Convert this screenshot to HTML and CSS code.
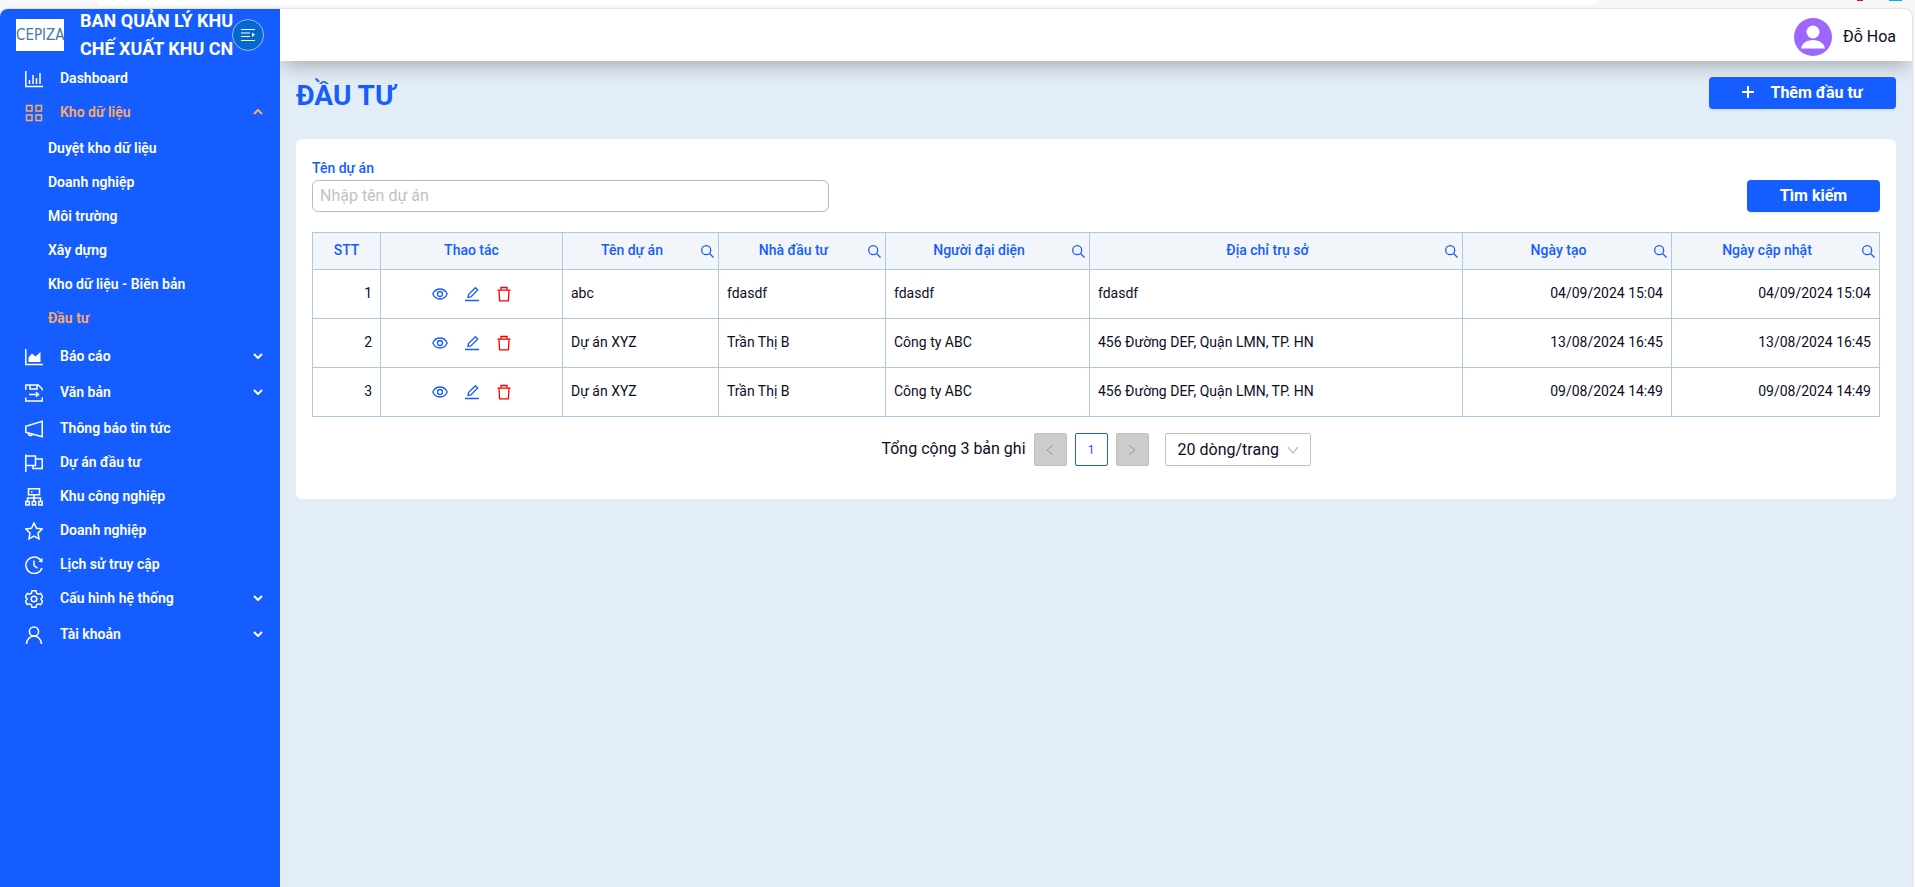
FILE: index.html
```html
<!DOCTYPE html>
<html lang="vi">
<head>
  <meta charset="UTF-8">
  <meta name="viewport" content="width=device-width, initial-scale=1">
  <title>Đầu tư</title>
  <link rel="stylesheet" href="styles.css">
</head>
<body>
  <svg class="sprite" aria-hidden="true">
    <symbol id="i-bar" viewBox="0 0 18 18"><path d="M.8 1v15.5H18M4.5 14v-4M8 14V5M11.5 14V8M15 14V3"/></symbol>
    <symbol id="i-grid" viewBox="0 0 18 18"><path d="M1.500 1.500h5.500v5.500h-5.500zM11 1.500h5.500v5.500H11zM1.500 11h5.500v5.500h-5.500zM11 11h5.500v5.500H11z"/></symbol>
    <symbol id="i-area" viewBox="0 0 18 18"><path d="M.8 1v15.500H18"/><path class="solid" d="M3.500 14V9.500L7 5.500l3.500 3L15.500 4v10z"/></symbol>
    <symbol id="i-save" viewBox="0 0 18 18"><path d="M.8 6V1h12.500l4 4v1.500M5 1v4h7V1M.8 13.500V17h16.500v-3.500M4 10.500h9.500M11 8.300l2.500 2.200-2.500 2.200"/></symbol>
    <symbol id="i-horn" viewBox="0 0 18 18"><path d="M.8 6.300v6l16.400 4.500V1.200L.8 6.300zM3.500 13a2 2 0 1 0 4 1"/></symbol>
    <symbol id="i-flag" viewBox="0 0 18 18"><path d="M.8.500V18M.8 2h9.700v9.500H.8M10.500 5h6.700v9.500H8v-3"/></symbol>
    <symbol id="i-cluster" viewBox="0 0 18 18"><path d="M3.500.800h11v6h-11zM9 7v6M2.500 13v-3h13v3M.800 13.500h3.500V17H.800zM7.200 13.500h3.500V17H7.200zM13.700 13.500h3.500V17h-3.500zM6 4h1.500"/></symbol>
    <symbol id="i-star" viewBox="0 0 18 18"><path d="M9 1l2.500 5.200 5.700.8-4.200 4 1 5.800L9 14l-5 2.800L5 11 .8 7l5.700-.8z"/></symbol>
    <symbol id="i-history" viewBox="0 0 18 18"><path d="M15.800 4.200A8.300 8.300 0 1 0 17 12M9 4.500v5l3.500 2.600"/><path class="solid" d="M17.500 1.800v4.700l-4-.8z"/></symbol>
    <symbol id="i-gear" viewBox="0 0 18 18"><path d="M7 .8h4l.6 2.400 1.700 1 2.400-.7 2 3.500L16 8.800v.7l1.700 1.700-2 3.400-2.400-.7-1.700 1-.6 2.400H7l-.6-2.400-1.700-1-2.400.7-2-3.400L2 9.500v-.8L.3 7l2-3.500 2.400.7 1.700-1z"/><circle cx="9" cy="9" r="2.800"/></symbol>
    <symbol id="i-user" viewBox="0 0 18 18"><circle cx="9" cy="5.500" r="4.600"/><path d="M1.500 18a7.500 7.900 0 0 1 15 0"/></symbol>
    <symbol id="i-chevron" viewBox="0 0 10 6"><path d="M1 1l4 4 4-4"/></symbol>
    <symbol id="i-search" viewBox="0 0 13 13"><circle cx="5.200" cy="5.200" r="4.500"/><path d="M8.500 8.500l4 4"/></symbol>
    <symbol id="i-eye" viewBox="0 0 16 16"><path d="M.8 8C2.300 4.700 4.800 3 8 3s5.700 1.700 7.200 5c-1.500 3.300-4 5-7.200 5S2.300 11.300.8 8z"/><circle cx="8" cy="8" r="2.500"/></symbol>
    <symbol id="i-edit" viewBox="0 0 16 16"><path d="M1 14.500h14M4 11.500l.5-2.900L11.400 1.700l2.300 2.300-6.900 6.900z"/></symbol>
    <symbol id="i-trash" viewBox="0 0 16 16"><path d="M1.500 4.200h13M5 4V1.500h6V4M3 4.500l.6 10.300h8.800L13 4.500"/></symbol>
  </svg>

  <div class="browser-edge"><i class="address"></i><i class="ext red"></i><i class="ext blue"></i></div>
  <div class="app">
    <aside class="sidebar">
      <div class="brand">
        <div class="logo">CEPIZA</div>
        <div class="brand-name">BAN QUẢN LÝ KHU CHẾ XUẤT KHU CN</div>
        <button class="collapse" type="button" aria-label="Thu gọn menu">
          <svg viewBox="0 0 14 14"><path d="M0 1.500h14M0 5h9M0 8.500h9M0 12.500h14"/><path class="solid" d="M11 4.500l3 2.300-3 2.300z"/></svg>
        </button>
      </div>
      <nav>
        <ul class="menu">
          <li><a href="#"><svg class="icon"><use href="#i-bar"/></svg>Dashboard</a></li>
          <li class="parent">
            <a href="#" class="active"><svg class="icon"><use href="#i-grid"/></svg>Kho dữ liệu<svg class="arrow up"><use href="#i-chevron"/></svg></a>
            <ul class="submenu">
              <li><a href="#">Duyệt kho dữ liệu</a></li>
              <li><a href="#">Doanh nghiệp</a></li>
              <li><a href="#">Môi trường</a></li>
              <li><a href="#">Xây dựng</a></li>
              <li><a href="#">Kho dữ liệu - Biên bản</a></li>
              <li><a href="#" class="active">Đầu tư</a></li>
            </ul>
          </li>
          <li class="parent"><a href="#"><svg class="icon"><use href="#i-area"/></svg>Báo cáo<svg class="arrow"><use href="#i-chevron"/></svg></a></li>
          <li class="parent"><a href="#"><svg class="icon"><use href="#i-save"/></svg>Văn bản<svg class="arrow"><use href="#i-chevron"/></svg></a></li>
          <li><a href="#"><svg class="icon"><use href="#i-horn"/></svg>Thông báo tin tức</a></li>
          <li><a href="#"><svg class="icon"><use href="#i-flag"/></svg>Dự án đầu tư</a></li>
          <li><a href="#"><svg class="icon"><use href="#i-cluster"/></svg>Khu công nghiệp</a></li>
          <li><a href="#"><svg class="icon"><use href="#i-star"/></svg>Doanh nghiệp</a></li>
          <li><a href="#"><svg class="icon"><use href="#i-history"/></svg>Lịch sử truy cập</a></li>
          <li class="parent"><a href="#"><svg class="icon"><use href="#i-gear"/></svg>Cấu hình hệ thống<svg class="arrow"><use href="#i-chevron"/></svg></a></li>
          <li class="parent"><a href="#"><svg class="icon"><use href="#i-user"/></svg>Tài khoản<svg class="arrow"><use href="#i-chevron"/></svg></a></li>
        </ul>
      </nav>
    </aside>

    <div class="main">
      <header class="topbar">
        <svg class="avatar" viewBox="0 0 38 38" aria-hidden="true">
          <circle cx="19" cy="19" r="19" fill="#9c66ff"/>
          <circle cx="19" cy="14" r="6.500" fill="#fff"/>
          <path d="M7 30.500c1-5 5.500-8.500 12-8.500s11 3.500 12 8.500z" fill="#fff"/>
        </svg>
        <span>Đỗ Hoa</span>
      </header>

      <main class="content">
        <div class="page-head">
          <h1>ĐẦU TƯ</h1>
          <button class="btn btn-add" type="button">
            <svg viewBox="0 0 12 12"><path d="M6 0v12M0 6h12"/></svg>
            Thêm đầu tư
          </button>
        </div>

        <section class="card">
          <form class="filter">
            <div class="field">
              <label for="name">Tên dự án</label>
              <input id="name" type="text" placeholder="Nhập tên dự án">
            </div>
            <button class="btn btn-search" type="button">Tìm kiếm</button>
          </form>

          <table>
            <colgroup>
              <col class="c-stt"><col class="c-act"><col class="c-name"><col class="c-investor">
              <col class="c-rep"><col class="c-addr"><col class="c-created"><col class="c-updated">
            </colgroup>
            <thead>
              <tr>
                <th>STT</th>
                <th>Thao tác</th>
                <th><div class="th"><span>Tên dự án</span><svg><use href="#i-search"/></svg></div></th>
                <th><div class="th"><span>Nhà đầu tư</span><svg><use href="#i-search"/></svg></div></th>
                <th><div class="th"><span>Người đại diện</span><svg><use href="#i-search"/></svg></div></th>
                <th><div class="th"><span>Địa chỉ trụ sở</span><svg><use href="#i-search"/></svg></div></th>
                <th><div class="th"><span>Ngày tạo</span><svg><use href="#i-search"/></svg></div></th>
                <th><div class="th"><span>Ngày cập nhật</span><svg><use href="#i-search"/></svg></div></th>
              </tr>
            </thead>
            <tbody>
              <tr>
                <td class="right">1</td>
                <td>
                  <div class="actions">
                    <button type="button" aria-label="Xem"><svg><use href="#i-eye"/></svg></button>
                    <button type="button" aria-label="Sửa"><svg><use href="#i-edit"/></svg></button>
                    <button type="button" class="delete" aria-label="Xóa"><svg><use href="#i-trash"/></svg></button>
                  </div>
                </td>
                <td>abc</td>
                <td>fdasdf</td>
                <td>fdasdf</td>
                <td>fdasdf</td>
                <td class="right">04/09/2024 15:04</td>
                <td class="right">04/09/2024 15:04</td>
              </tr>
              <tr>
                <td class="right">2</td>
                <td>
                  <div class="actions">
                    <button type="button" aria-label="Xem"><svg><use href="#i-eye"/></svg></button>
                    <button type="button" aria-label="Sửa"><svg><use href="#i-edit"/></svg></button>
                    <button type="button" class="delete" aria-label="Xóa"><svg><use href="#i-trash"/></svg></button>
                  </div>
                </td>
                <td>Dự án XYZ</td>
                <td>Trần Thị B</td>
                <td>Công ty ABC</td>
                <td>456 Đường DEF, Quận LMN, TP. HN</td>
                <td class="right">13/08/2024 16:45</td>
                <td class="right">13/08/2024 16:45</td>
              </tr>
              <tr>
                <td class="right">3</td>
                <td>
                  <div class="actions">
                    <button type="button" aria-label="Xem"><svg><use href="#i-eye"/></svg></button>
                    <button type="button" aria-label="Sửa"><svg><use href="#i-edit"/></svg></button>
                    <button type="button" class="delete" aria-label="Xóa"><svg><use href="#i-trash"/></svg></button>
                  </div>
                </td>
                <td>Dự án XYZ</td>
                <td>Trần Thị B</td>
                <td>Công ty ABC</td>
                <td>456 Đường DEF, Quận LMN, TP. HN</td>
                <td class="right">09/08/2024 14:49</td>
                <td class="right">09/08/2024 14:49</td>
              </tr>
            </tbody>
          </table>

          <div class="pagination">
            <span class="total">Tổng cộng 3 bản ghi</span>
            <button type="button" disabled aria-label="Trang trước"><svg viewBox="0 0 8 12"><path d="M7 1L1 6l6 5"/></svg></button>
            <button type="button" class="current">1</button>
            <button type="button" disabled aria-label="Trang sau"><svg viewBox="0 0 8 12"><path d="M1 1l6 5-6 5"/></svg></button>
            <div class="page-size">
              <select aria-label="Số dòng mỗi trang">
                <option>20 dòng/trang</option>
              </select>
              <svg viewBox="0 0 12 8"><path d="M1 1l5 6 5-6"/></svg>
            </div>
          </div>
        </section>
      </main>
    </div>
  </div>
</body>
</html>
```

FILE: styles.css
```css
* {
  box-sizing: border-box;
}
body {
  margin: 0;
  min-height: 100vh;
  display: flex;
  flex-direction: column;
  background: #f7f7f7;
  color: #0d0d1f;
  font-family: Roboto, "Liberation Sans", sans-serif;
  font-size: 14px;
  line-height: 22px;
}
svg {
  fill: none;
  stroke: currentColor;
  flex-shrink: 0;
}
.solid {
  fill: currentColor;
  stroke: none;
}
.sprite {
  display: none;
}
button, input, select {
  font-family: inherit;
}
a {
  color: inherit;
  text-decoration: none;
}
ul {
  list-style: none;
  margin: 0;
  padding: 0;
}

.browser-edge {
  height: 9px;
  padding: 0 13px 0 97px;
  display: flex;
  align-items: flex-start;
}
.address {
  flex: 1;
  height: 5px;
  margin-right: 260px;
  background: #fff;
  border-radius: 0 0 10px 10px;
}
.ext {
  height: 1px;
}
.red {
  width: 6px;
  background: #c81e1e;
}
.blue {
  width: 13px;
  margin-left: 26px;
  background: #0ea5e9;
}
.app {
  flex: 1;
  display: flex;
  margin-right: 3px;
  border-radius: 8px 8px 0 0;
  overflow: hidden;
  background: #e3edf7;
  box-shadow: 0 0 2px rgba(0, 0, 0, 0.3);
}

/* sidebar */
.sidebar {
  position: relative;
  z-index: 1;
  width: 280px;
  flex-shrink: 0;
  background: #155dff;
  color: #fff;
}
.brand {
  height: 52px;
  padding: 0 16px;
  display: flex;
  align-items: center;
  position: relative;
}
.logo {
  width: 48px;
  height: 32px;
  background: #fff;
  color: #4779a6;
  font-family: "Liberation Sans Narrow", "DejaVu Sans Condensed", sans-serif;
  font-size: 15px;
  line-height: 32px;
  text-align: center;
}
.brand-name {
  width: 160px;
  margin-left: 16px;
  font-size: 18px;
  font-weight: 700;
  line-height: 28px;
}
.collapse {
  position: absolute;
  right: 16px;
  top: 10px;
  width: 32px;
  height: 32px;
  padding: 0;
  display: flex;
  align-items: center;
  justify-content: center;
  border: 1px solid #9db9dc;
  border-radius: 50%;
  background: #0469cf;
  color: #fff;
}
.collapse svg {
  width: 14px;
  height: 14px;
}
.menu a {
  height: 34px;
  padding: 0 16px 0 24px;
  display: flex;
  align-items: center;
  font-weight: 600;
}
.menu .active {
  color: #ffac60;
}
.menu .parent {
  margin-bottom: 2px;
}
.menu .icon {
  width: 18px;
  height: 18px;
  margin: 2px 17px 0 1px;
  stroke-width: 1.5;
}
.arrow {
  width: 10px;
  height: 6px;
  margin-left: auto;
  margin-right: 1px;
  stroke-width: 2;
}
.arrow.up {
  transform: rotate(180deg);
}
.submenu {
  padding: 2px 0;
}
.menu .submenu a {
  padding-left: 48px;
}

/* top bar */
.main {
  flex: 1;
  min-width: 0;
}
.topbar {
  height: 52px;
  padding: 4px 16px 0;
  display: flex;
  align-items: center;
  justify-content: flex-end;
  gap: 11px;
  background: #fff;
  font-size: 16px;
  box-shadow: 0 8px 20px -4px rgba(0, 0, 0, 0.3);
}
.avatar {
  width: 38px;
  height: 38px;
  stroke: none;
}

/* content */
.content {
  padding: 16px;
}
.page-head {
  display: flex;
  justify-content: space-between;
  align-items: flex-start;
  margin-bottom: 24px;
}
h1 {
  margin: 0;
  color: #155dff;
  font-size: 28px;
  font-weight: 700;
  line-height: 38px;
}
.btn {
  height: 32px;
  padding: 0 32px 2px;
  display: flex;
  align-items: center;
  justify-content: center;
  border: 0;
  border-radius: 4px;
  background: #155dff;
  color: #fff;
  font-size: 16px;
  font-weight: 700;
  box-shadow: 0 2px 2px rgba(0, 0, 0, 0.06);
}
.btn svg {
  width: 12px;
  height: 12px;
  margin-right: 16px;
  stroke-width: 2;
}
.btn-add {
  width: 187px;
}
.btn-search {
  width: 133px;
}
.card {
  padding: 18px 16px 33px;
  background: #fff;
  border-radius: 6px;
}
.filter {
  display: flex;
  justify-content: space-between;
  align-items: flex-end;
  margin-bottom: 20px;
}
.field {
  width: 33%;
}
.field label {
  display: block;
  margin-bottom: 1px;
  color: #155dff;
  font-weight: 500;
}
.field input {
  display: block;
  width: 100%;
  height: 32px;
  padding: 0 7px 2px;
  border: 1px solid #b8b8b8;
  border-radius: 6px;
  font-size: 16px;
}
.field input::placeholder {
  color: #c2c2c2;
}

table {
  width: 100%;
  table-layout: fixed;
  border-collapse: collapse;
}
.c-stt { width: 68px; }
.c-act { width: 182px; }
.c-name { width: 156px; }
.c-investor { width: 167px; }
.c-rep { width: 204px; }
.c-created { width: 209px; }
.c-updated { width: 208px; }
th, td {
  border: 1px solid #aec8df;
  padding: 0 8px 2px;
}
th {
  height: 37px;
  background: #f2f5fa;
  color: #155dff;
  font-weight: 500;
}
td {
  height: 49px;
}
.th {
  display: flex;
  align-items: center;
  gap: 8px;
  margin-right: -4px;
}
.th span {
  flex: 1;
}
.th svg {
  width: 13px;
  height: 13px;
  margin-top: 2px;
  stroke-width: 1.3;
}
.right {
  text-align: right;
}
.actions {
  display: flex;
  justify-content: center;
  gap: 16px;
  padding-top: 2px;
}
.actions button {
  padding: 0;
  border: 0;
  background: none;
  color: #155dff;
}
.actions .delete {
  color: #f00;
}
.actions svg {
  display: block;
  width: 16px;
  height: 16px;
  stroke-width: 1.3;
}

.pagination {
  display: flex;
  justify-content: center;
  align-items: center;
  gap: 8px;
  margin-top: 16px;
  font-size: 16px;
}
.total {
  padding-bottom: 2px;
}
.pagination button {
  display: flex;
  align-items: center;
  justify-content: center;
  width: 33px;
  height: 33px;
  padding: 0;
  border: 1px solid #bfbfbf;
  border-radius: 2px;
  background: #ccc;
  color: #999;
}
.pagination button svg {
  width: 8px;
  height: 12px;
}
.pagination .current {
  border-color: #155dff;
  background: #fff;
  color: #155dff;
  font-size: 12px;
}
.page-size {
  position: relative;
  margin-left: 8px;
}
.page-size select {
  display: block;
  width: 146px;
  height: 33px;
  padding: 0 12px;
  appearance: none;
  border: 1px solid #bfbfbf;
  border-radius: 2px;
  background: #fff;
  color: inherit;
  font-size: 16px;
}
.page-size svg {
  position: absolute;
  right: 12px;
  top: 13px;
  width: 12px;
  height: 8px;
  color: #bfbfbf;
  stroke-width: 1.3;
  pointer-events: none;
}
```
